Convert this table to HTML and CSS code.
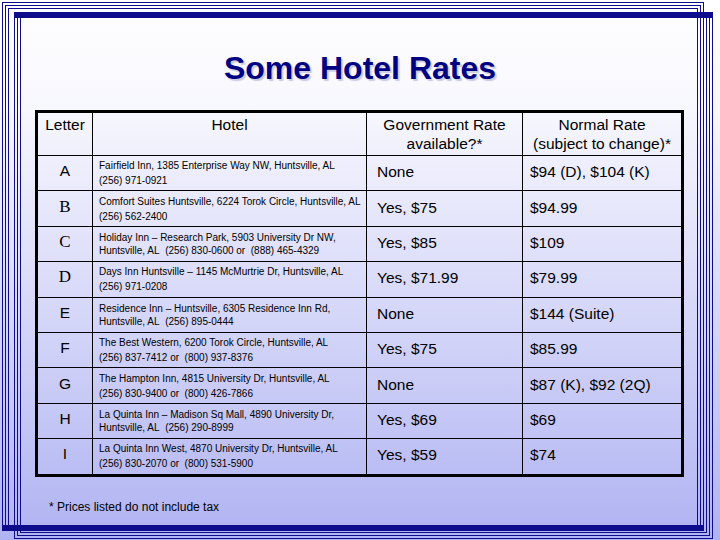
FILE: index.html
```html
<!DOCTYPE html>
<html>
<head>
<meta charset="utf-8">
<title>Some Hotel Rates</title>
<link rel="stylesheet" href="styles.css">
</head>
<body>
<div class="slide">
  <h1 class="title">Some Hotel Rates</h1>
  <table class="rates">
    <colgroup><col class="c1"><col class="c2"><col class="c3"><col class="c4"></colgroup>
    <thead>
      <tr><th>Letter</th><th>Hotel</th><th>Government Rate<br>available?*</th><th>Normal Rate<br>(subject to change)*</th></tr>
    </thead>
    <tbody>
      <tr><td class="let">A</td><td class="hotel hl">Fairfield Inn, 1385 Enterprise Way NW, Huntsville, AL<br>(256) 971-0921</td><td class="gov">None</td><td class="norm">$94 (D), $104 (K)</td></tr>
      <tr><td class="let serif">B</td><td class="hotel hl">Comfort Suites Huntsville, 6224 Torok Circle, Huntsville, AL<br>(256) 562-2400</td><td class="gov">Yes, $75</td><td class="norm">$94.99</td></tr>
      <tr><td class="let serif">C</td><td class="hotel hw">Holiday Inn – Research Park, 5903 University Dr NW,<br>Huntsville, AL&nbsp; (256) 830-0600 or&nbsp; (888) 465-4329</td><td class="gov">Yes, $85</td><td class="norm">$109</td></tr>
      <tr><td class="let serif">D</td><td class="hotel hl">Days Inn Huntsville – 1145 McMurtrie Dr, Huntsville, AL<br>(256) 971-0208</td><td class="gov">Yes, $71.99</td><td class="norm">$79.99</td></tr>
      <tr><td class="let">E</td><td class="hotel hw">Residence Inn – Huntsville, 6305 Residence Inn Rd,<br>Huntsville, AL&nbsp; (256) 895-0444</td><td class="gov">None</td><td class="norm">$144 (Suite)</td></tr>
      <tr><td class="let">F</td><td class="hotel hl">The Best Western, 6200 Torok Circle, Huntsville, AL<br>(256) 837-7412 or&nbsp; (800) 937-8376</td><td class="gov">Yes, $75</td><td class="norm">$85.99</td></tr>
      <tr><td class="let">G</td><td class="hotel hl">The Hampton Inn, 4815 University Dr, Huntsville, AL<br>(256) 830-9400 or&nbsp; (800) 426-7866</td><td class="gov">None</td><td class="norm">$87 (K), $92 (2Q)</td></tr>
      <tr><td class="let">H</td><td class="hotel hw">La Quinta Inn – Madison Sq Mall, 4890 University Dr,<br>Huntsville, AL&nbsp; (256) 290-8999</td><td class="gov">Yes, $69</td><td class="norm">$69</td></tr>
      <tr class="last"><td class="let">I</td><td class="hotel hl">La Quinta Inn West, 4870 University Dr, Huntsville, AL<br>(256) 830-2070 or&nbsp; (800) 531-5900</td><td class="gov">Yes, $59</td><td class="norm">$74</td></tr>
    </tbody>
  </table>
  <p class="note">* Prices listed do not include tax</p>
</div>
</body>
</html>
```
FILE: styles.css
```css
html, body {
  margin: 0;
  padding: 0;
}

body {
  font-family: "Liberation Sans", Arial, sans-serif;
  color: #000;
}

.slide {
  --n: linear-gradient(#0c0c8c, #0c0c8c);
  width: 720px;
  height: 540px;
  box-sizing: border-box;
  padding-top: 48px;
  overflow: hidden;
  background:
    /* thick bars */
    var(--n) 14px 12px / 699px 6px no-repeat,
    var(--n) 2px 525px / 702px 6px no-repeat,
    /* frame A: left lines */
    var(--n) 2px 2px / 1px 524px no-repeat,
    var(--n) 5px 5px / 1px 521px no-repeat,
    var(--n) 8px 8px / 1px 518px no-repeat,
    /* frame A: top lines */
    var(--n) 2px 2px / 702px 1px no-repeat,
    var(--n) 5px 5px / 696px 1px no-repeat,
    var(--n) 8px 8px / 690px 1px no-repeat,
    /* frame A: right lines */
    var(--n) 703px 2px / 1px 524px no-repeat,
    var(--n) 700px 5px / 1px 521px no-repeat,
    var(--n) 697px 8px / 1px 518px no-repeat,
    /* frame B: left lines */
    var(--n) 14px 12px / 1px 527px no-repeat,
    var(--n) 17px 12px / 1px 524px no-repeat,
    var(--n) 20px 12px / 1px 521px no-repeat,
    /* frame B: right lines */
    var(--n) 712px 12px / 1px 527px no-repeat,
    var(--n) 709px 12px / 1px 524px no-repeat,
    var(--n) 706px 12px / 1px 521px no-repeat,
    /* frame B: bottom lines */
    var(--n) 14px 538px / 699px 1px no-repeat,
    var(--n) 17px 535px / 693px 1px no-repeat,
    var(--n) 20px 532px / 687px 1px no-repeat,
    linear-gradient(180deg, #ffffff 0px, #f7f7fe 110px, #b0b3f2 540px);
}

.title {
  margin: 0;
  font-size: 32px;
  line-height: 40px;
  font-weight: bold;
  text-align: center;
  color: #000080;
  text-shadow: 2px 2px 1px rgba(60, 60, 140, 0.25);
}

.rates {
  margin: 22px 0 0 35px;
  width: 649px;
  table-layout: fixed;
  border-collapse: separate;
  border-spacing: 0;
  border: 3px solid #000;
}

.c1 { width: 55px; }
.c2 { width: 274px; }
.c3 { width: 156px; }
.c4 { width: 158px; }

.rates th,
.rates td {
  padding: 0;
  border-right: 1px solid #000;
  border-bottom: 1px solid #000;
}

.rates th:last-child,
.rates td:last-child {
  border-right: none;
}

.rates thead tr {
  height: 43px;
}

.rates th {
  font-weight: normal;
  font-size: 15.5px;
  line-height: 19px;
  vertical-align: top;
  padding-top: 2px;
  text-align: center;
}

.rates tbody tr {
  height: 35.4px;
}

.rates tbody tr.last {
  height: 34.4px;
}

.rates tr.last td {
  border-bottom: none;
}

.rates td {
  vertical-align: middle;
}

.let {
  text-align: center;
  font-size: 15.5px;
  padding-bottom: 4px !important;
}

.let.serif {
  font-family: "Liberation Serif", "Times New Roman", serif;
  font-size: 17px;
}

.hotel {
  font-size: 10px;
  padding-left: 6px !important;
  white-space: nowrap;
}

.hl { line-height: 15px; }
.hw { line-height: 13px; }

.gov,
.norm {
  font-size: 15.5px;
  line-height: 19px;
  padding-bottom: 3px !important;
}

.gov { padding-left: 10px !important; }
.norm { padding-left: 7px !important; }

.note {
  margin: 23px 0 0 49px;
  font-size: 12px;
  line-height: 14px;
}
```
